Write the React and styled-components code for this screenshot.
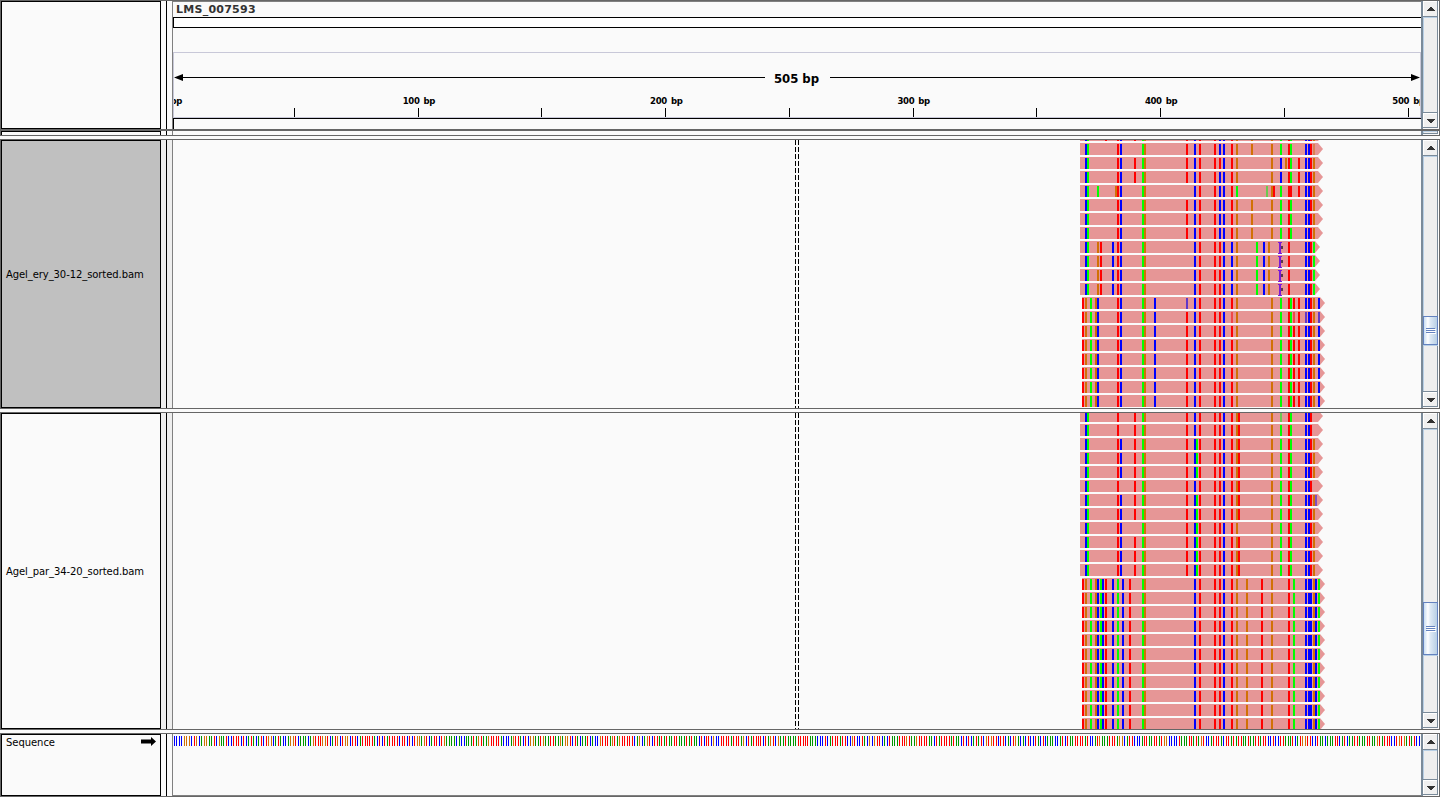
import React from "react";
import styled, { createGlobalStyle } from "styled-components";

const Global = createGlobalStyle`
  * { box-sizing: border-box; }
  body { margin: 0; background: #fafafa; font-family: "DejaVu Sans", sans-serif; overflow: hidden; }
  svg { display: block; }
`;
const Page = styled.div`
  display: flex;
  flex-direction: column;
  width: 1440px;
  height: 797px;
  background: #fafafa;
`;
const Panel = styled.section`
  display: grid;
  grid-template-columns: 160px 5px 1px 5px 1249px 18px;
  height: ${(p) => p.$h}px;
  margin-bottom: ${(p) => p.$gap || 0}px;
  border: 1px solid #666;
  border-top-width: ${(p) => p.$top ?? 1}px;
  border-bottom-width: ${(p) => p.$bottom ?? 1}px;
`;
const NameCell = styled.div`
  display: flex;
  align-items: ${(p) => (p.$top ? "flex-start" : "center")};
  justify-content: space-between;
  padding: ${(p) => (p.$top ? "2px 4px 0 4px" : "2px 4px 0")};
  border: 1px solid #000;
  border-bottom-width: ${(p) => (p.$open ? 0 : 1)}px;
  background: ${(p) => (p.$selected ? "#c0c0c0" : "#fafafa")};
  font-size: 10px;
  line-height: 12px;
  letter-spacing: ${(p) => (p.$top ? "-0.05px" : "-0.08px")};
  white-space: nowrap;
`;
const Gutter = styled.div`
  background: ${(p) => (p.$shade ? "#eee" : "#fafafa")};
`;
const Divider = styled.div`
  background: #000;
`;
const DataCell = styled.div`
  border-left: 1px solid #808080;
  border-top: ${(p) => (p.$rule ? "1px solid #808080" : "0")};
  border-bottom: ${(p) => (p.$foot ? "1px solid #808080" : "0")};
  overflow: hidden;
`;
const Locus = styled.div`
  height: 15px;
  padding: 1px 0 0 3px;
  font-size: 11px;
  font-weight: bold;
  line-height: 14px;
  letter-spacing: 0.25px;
  color: #333;
`;
const Ideogram = styled.div`
  height: 11px;
  border: 1px solid #000;
  border-right: 0;
  background: #fff;
`;
const RulerBox = styled.div`
  height: 66px;
  margin-top: 24px;
  border: 1px solid #c8c8d8;
`;
const RulerBase = styled.div`
  height: 11px;
  border: solid #000;
  border-width: 1px 0 0 1px;
`;
const Scroll = styled.div`
  display: flex;
  flex-direction: column;
  padding-bottom: 1px;
  border-left: 2px solid #7a8a99;
  border-right: 1px solid #fff;
  overflow: hidden;
`;
const ArrowButton = styled.div`
  flex: none;
  height: ${(p) => p.$h}px;
  display: flex;
  justify-content: center;
  padding: 6px 0 0 2px;
  background: #f0f0f0;
  border: solid #7a8a99;
  border-width: 0 1px 1px 0;
  box-shadow: inset 1px 1px #fff;
`;
const Track = styled.div`
  flex: 1;
  min-height: 0;
  background: #eee;
  border-right: 1px solid #7a8a99;
  border-bottom: 1px solid #7a8a99;
  box-shadow: inset 1px 1px #b8cfe5;
  padding-top: ${(p) => p.$offset || 0}px;
`;
const Thumb = styled.div`
  height: ${(p) => p.$h}px;
  width: 15px;
  display: flex;
  align-items: center;
  justify-content: center;
  border: 1px solid #6382bf;
  background: linear-gradient(90deg, #c8ddf2 0, #fff 30%, #dce8f4 50%, #b8cfe5 100%);
  box-shadow: 0 1px #b8cfe5;
`;

const Arrow = ({ down }) => (
  <svg width="8" height="4" viewBox="0 0 8 4" shapeRendering="crispEdges" fill="#333">
    {[0, 1, 2, 3].map((i) => (
      <rect key={i} x={3 - i} y={down ? 3 - i : i} width={2 + 2 * i} height="1" />
    ))}
  </svg>
);
const ScrollBar = ({ offset, thumb }) => (
  <Scroll>
    <ArrowButton $h={16}><Arrow /></ArrowButton>
    <Track $offset={offset}>
      {thumb && (
        <Thumb $h={thumb}>
          <svg width="10" height="6" shapeRendering="crispEdges">
            {[0, 2, 4].map((y) => (
              <g key={y}>
                <rect y={y + 1} x="1" width="9" height="1" fill="#fff" />
                <rect y={y} width="9" height="1" fill="#6382bf" />
              </g>
            ))}
          </svg>
        </Thumb>
      )}
    </Track>
    <ArrowButton $h={15}><Arrow down /></ArrowButton>
  </Scroll>
);

const COLORS = { R: "#ff0000", B: "#0000ff", G: "#00ff00", O: "#d17105", P: "#8050c0", r: "#f04848", g: "#6cc850", o: "#da8050", b: "#6038c8" };

// Each mark is an x offset from 1000, a base colour and an optional width.
const parse = (s) => s.trim().split(/\s+/).map((t) => {
  const m = t.match(/^(\d+)([A-Za-z])(\d*)$/);
  return { x: +m[1] + 1000, c: COLORS[m[2]], w: +(m[3] || 2) };
});
const LEFT = "85B 87G 117R 120B 142G 144O 194B 199R 214R 223B 236O ";
const END = "305B 308B 310R ";
const A = LEFT + END + "186R 219B 231R 251O 271O 280G 288R 290G 313O ";
const A2 = LEFT + END + "134R 186R 231R 271O 280B 288R 290G 298R 313O ";
const BB = LEFT + END + "97O 100R 112B 219R 231B 256G 263B 268O 288R 313G ";
const C0 = "82R 85O 90G 95O 97B 117R 120B 142G 144O 154B 194B 199R 214R 219R 223B 236O 271O 280G 288R 290G 298R 308B 310R 313O ";
const C = C0 + "186R 231R 293R 305B 318B ";
const D0 = "85B 87G 117R 142G 144O 186R 194B 199R 214R 219R 223B 231R 236O 271O 288R 290G " + END;
const D = D0 + "120B 134R 196G 238R 280G 313O ";
const D1 = D0 + "134R 238R 280G ";
const E = "82R 85O 90G 95O 97B 100G 102B 105R 112B 117G 122B 129R 142G 144O 194B 199R 214R 219R 223B 231R 236O 246O 261R 271O 288R 293G 305B 308B4 313O 315B 318G ";

const row = (marks, start = 1080, end = 1318, ins = false) => ({ marks: parse(marks), start, end, ins });
const late = (m) => row(m, 1082, 1320);
const ERY = [
  row(A + "105R 134R"),
  row(A.replace("313O", "313o")),
  row(A2 + "219R 285O"),
  row(A2 + "219B"),
  row(LEFT + END + "97G 115O 219B 231R 236G 266g 271O 273R 280G 288R4 298R 313O"),
  row(A), row(A), row(A),
  ...Array.from({ length: 4 }, () => row(BB, 1080, 1315, true)),
  late(C0 + "186b 231R 293R 305B 318B"),
  late(C0 + "186R 231r 293r 305b 318b"),
  ...Array.from({ length: 6 }, () => late(C)),
];
const PAR = [
  row(D1.replace("280G", "280g")), row(D1), row(D), row(D), row(D), row(D1),
  row(D + "315P"), row(D), row(D0 + "120B 196G 280G 313O"), row(D), row(D), row(D),
  ...Array.from({ length: 11 }, () => late(E)),
];

const Reads = ({ rows, first, top, height }) => (
  <svg width="1248" height={height} viewBox={`173 ${top} 1248 ${height}`} shapeRendering="crispEdges">
    <path d={`M795.5 ${top}V${top + height}M798.5 ${top}V${top + height}`} stroke="#000" strokeDasharray="5 2" />
    {rows.map((r, i) => {
      const y = first + 14 * i;
      return (
        <g key={i}>
          <path shapeRendering="auto" fill="#e69696" d={`M${r.start} ${y}H${r.end}L${r.end + 5} ${y + 6}L${r.end} ${y + 12}H${r.start}Z`} />
          {r.marks.map((m, k) => (
            <rect key={k} x={m.x} y={y + 1} width={m.w} height="11" fill={m.c} />
          ))}
          {r.ins && (
            <g>
              <path d={`M1278 ${y + 1}h4v1h-1v10h1v1h-4v-1h1v-10h-1z`} fill="#7a18d8" />
              <rect x="1281" y={y + 5} width="2" height="3" fill="#5c3848" />
            </g>
          )}
        </g>
      );
    })}
  </svg>
);

// Only the head and the tail are transcribed bases; the stretch between them
// is pseudo-random filler and carries no real sequence data.
const SEQ_HEAD = "BBBBOOOBROBGOOGGRBOGGRBBRRRBRBGRGBGRBROOBGRGBBGOORBGGGBGORRROORBGROBROOBRR";
const SEQ_TAIL = "BGRBGGRRGGGRRGGORGRRRBBROROGRGRBB";
const BASES = { B: "#0000ff", G: "#009600", R: "#ff0000", O: "#d17105" };
const buildSequence = (length) => {
  let seed = 7593;
  let middle = "";
  while (middle.length < length - SEQ_HEAD.length - SEQ_TAIL.length) {
    seed = (seed * 1103515245 + 12345) % 2147483648;
    middle += "RGBRGORBGR"[Math.floor((seed / 2147483648) * 10)];
  }
  return SEQ_HEAD + middle + SEQ_TAIL;
};
const SEQ = buildSequence(504);
const Sequence = () => (
  <svg width="1248" height="12" viewBox="173 734 1248 12" shapeRendering="crispEdges">
    {[...SEQ].map((b, i) => (
      <rect key={i} x={Math.round(174 + i * 2.4745)} y="736" width="1" height="10" fill={BASES[b]} />
    ))}
  </svg>
);

const Ruler = () => (
  <svg width="1246" height="64" viewBox="174 53 1246 64" fontFamily="'DejaVu Sans Condensed', 'DejaVu Sans', sans-serif" fontStretch="condensed" fontWeight="bold">
    <g shapeRendering="crispEdges">
      <rect x="180" y="77" width="585" height="1" />
      <rect x="830" y="77" width="585" height="1" />
      {[294, 418, 541, 665, 789, 913, 1036, 1160, 1284, 1408].map((x) => (
        <rect key={x} x={x} y="108" width="1" height="9" />
      ))}
    </g>
    <path d="M174 77.5L183 74V81ZM1420 77.5L1411 74V81Z" />
    <text x="796.5" y="83" fontSize="13" textAnchor="middle">505 bp</text>
    {["0 bp", "100 bp", "200 bp", "300 bp", "400 bp", "500 bp"].map((t, i) => (
      <text key={t} x={171.5 + i * 247.4} y="103.6" fontSize="9.5" letterSpacing="-0.35" wordSpacing="1.4" textAnchor="middle">{t}</text>
    ))}
  </svg>
);

const Gutters = ({ shade }) => (
  <>
    <Gutter $shade={shade} />
    <Divider />
    <Gutter $shade={shade} />
  </>
);

export default function App() {
  return (
    <Page>
      <Global />
      <Panel $h={131} $bottom={2}>
        <NameCell />
        <Gutters />
        <DataCell $rule>
          <Locus>LMS_007593</Locus>
          <Ideogram />
          <RulerBox><Ruler /></RulerBox>
          <RulerBase />
        </DataCell>
        <ScrollBar />
      </Panel>
      <Panel $h={5} $gap={3} $top={0}>
        <NameCell $open />
        <Gutters />
        <DataCell />
        <Scroll><Track /></Scroll>
      </Panel>
      <Panel $h={270} $gap={3}>
        <NameCell $selected>Agel_ery_30-12_sorted.bam</NameCell>
        <Gutters shade />
        <DataCell><Reads rows={ERY} first={129} top={140} height={268} /></DataCell>
        <ScrollBar offset={160} thumb={29} />
      </Panel>
      <Panel $h={318} $gap={3}>
        <NameCell>Agel_par_34-20_sorted.bam</NameCell>
        <Gutters shade />
        <DataCell><Reads rows={PAR} first={410} top={413} height={316} /></DataCell>
        <ScrollBar offset={173} thumb={53} />
      </Panel>
      <Panel $h={64}>
        <NameCell $top>
          Sequence
          <svg width="15" height="9" viewBox="0 0 15 9"><path d="M0 2.5H10V0L15 4.5L10 9V6.5H0Z" /></svg>
        </NameCell>
        <Gutters />
        <DataCell $foot><Sequence /></DataCell>
        <ScrollBar />
      </Panel>
    </Page>
  );
}
